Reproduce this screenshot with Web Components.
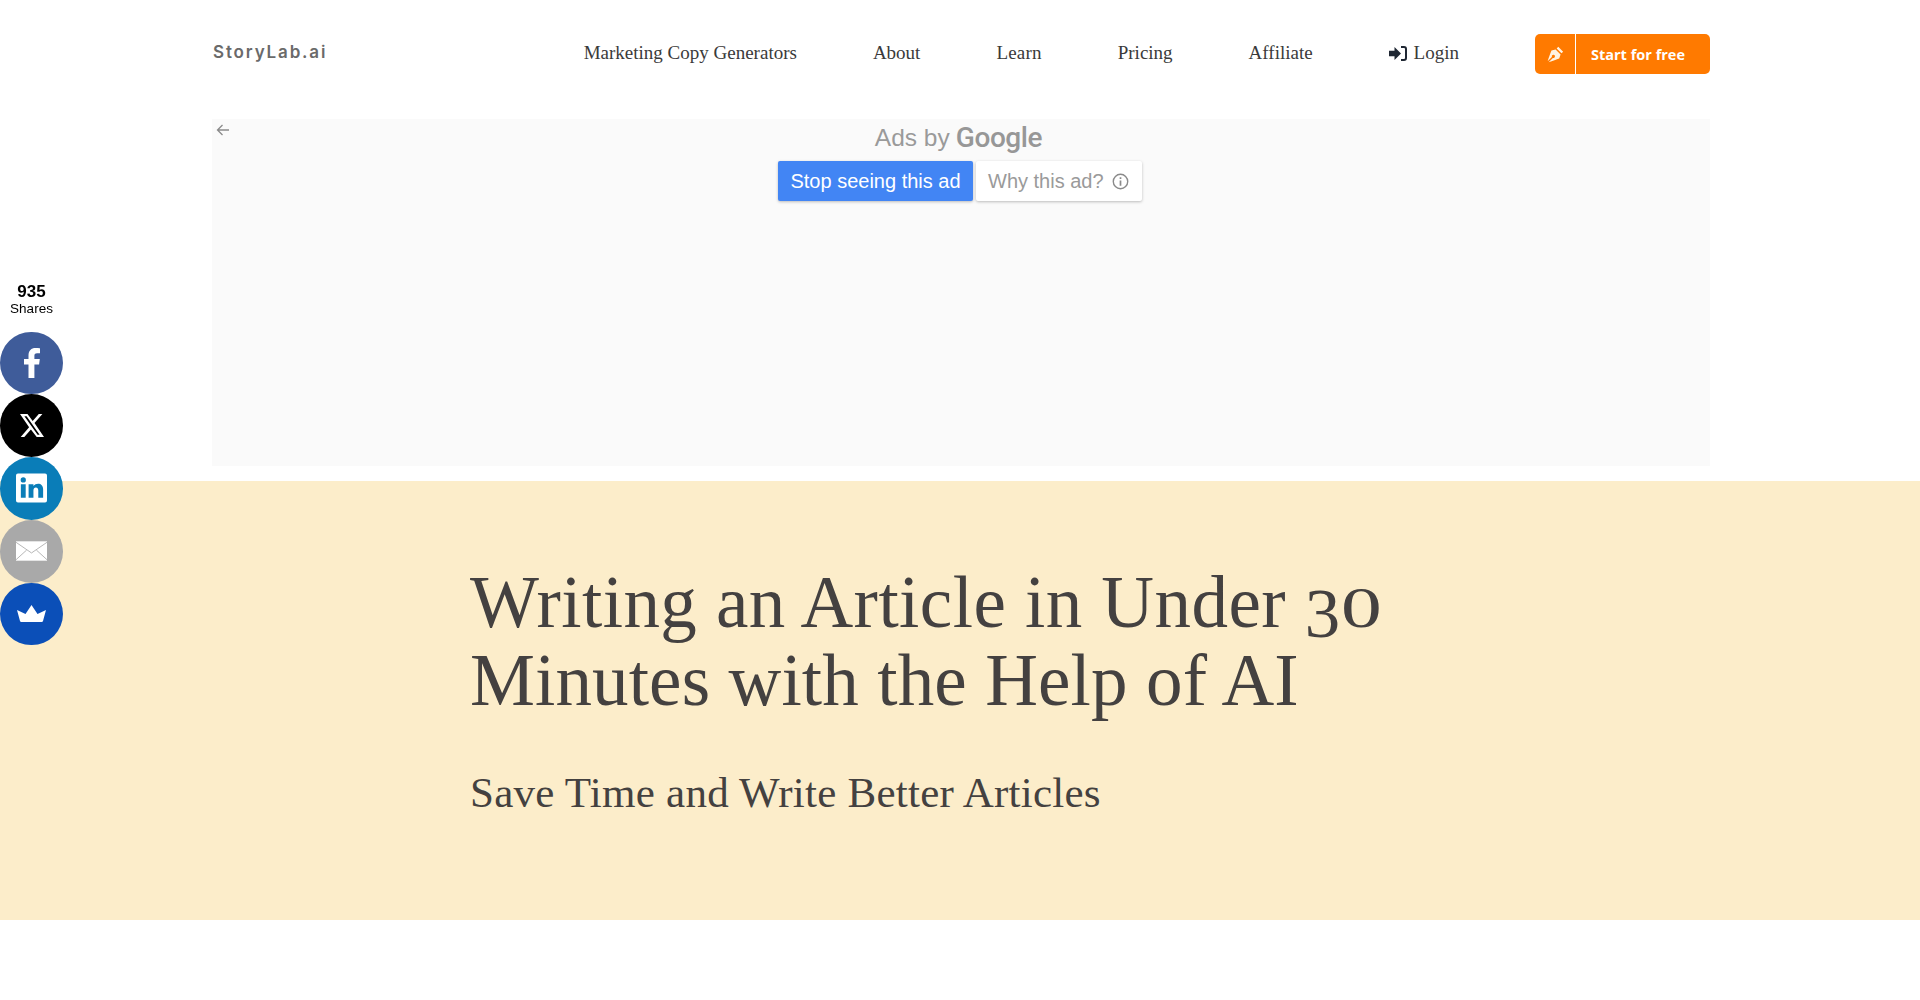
<!DOCTYPE html>
<html lang="en">
<head>
<meta charset="utf-8">
<title>Writing an Article in Under 30 Minutes with the Help of AI</title>
<style>
  html, body { margin: 0; padding: 0; background: #fff; }
  body { font-family: "Liberation Serif", serif; height: 1000px; overflow: hidden; }
  /* Georgia's figures are old style: the 3 drops below the baseline, the 0 is a wide x-height round */
  .fig { line-height: 0; letter-spacing: 0; }
  .fig.three { font-size: .97em; position: relative; top: .14em; }
  .fig.zero { display: inline-block; font-size: .77em; margin-left: 1px; transform: scaleX(1.45); transform-origin: left center; }
  .line2 { letter-spacing: .13px; }
</style>
</head>
<body>
<site-header></site-header>
<ad-slot></ad-slot>
<article-hero>
  <span slot="title">Writing an Article in Under <span class="fig three">3</span><span class="fig zero">0</span> <span class="line2">Minutes with the Help of AI</span></span>
  <span slot="subtitle">Save Time and Write Better Articles</span>
</article-hero>
<share-bar count="935"></share-bar>

<script>
class SiteHeader extends HTMLElement {
  constructor() {
    super();
    this.attachShadow({ mode: "open" });
  }
  connectedCallback() {
    this.shadowRoot.innerHTML = `
      <style>
        :host { display: block; height: 119px; }
        .bar { width: 1498px; margin: 0 0 0 212px; height: 108px; display: flex; align-items: center; padding-left: 1px; box-sizing: border-box; }
        .logo { font: 600 17px "Inter", sans-serif; letter-spacing: 1.85px; color: #6a6a6a; margin-top: -5px; }
        nav { margin-left: auto; display: flex; align-items: center; gap: 76px; font: 19px "Liberation Serif", serif; color: #3a3a3a; }
        nav > span:not(.btn) { position: relative; top: -1px; }
        .learn { letter-spacing: .2px; }
        .login { display: flex; align-items: center; gap: 7px; }
        .login svg { width: 18px; height: 15px; }
        .btn { display: flex; align-items: stretch; width: 175px; height: 40px; border-radius: 5px; overflow: hidden; background: #ff7a00; color: #fff; font: 700 14.500px "Open Sans", sans-serif; }
        .btn .ico { width: 40px; display: flex; align-items: center; justify-content: center; border-right: 1px solid #fff; }
        .btn .ico svg { width: 17px; height: 17px; }
        .btn .lab { flex: 1; display: flex; align-items: center; padding-left: 15px; }
      </style>
      <div class="bar">
        <div class="logo">StoryLab.ai</div>
        <nav>
          <span>Marketing Copy Generators</span>
          <span>About</span>
          <span class="learn">Learn</span>
          <span>Pricing</span>
          <span>Affiliate</span>
          <span class="login">
            <svg viewBox="0 0 18 15"><path fill="#1f2733" d="M0 4.800h5.500V1l6.500 6.500L5.500 14v-3.800H0z"/><path fill="none" stroke="#1f2733" stroke-width="2" d="M12 1h3a2 2 0 0 1 2 2v9a2 2 0 0 1-2 2h-3"/></svg>
            Login
          </span>
          <span class="btn">
            <span class="ico"><svg viewBox="0 0 16 16"><path fill="#fff3e2" d="M10.600 .8l4.600 4.600-1.600 1.500-4.500-4.500zM8.100 3.200l4.700 4.700-1.300 3.800c-2.700 1-5.800 2.100-10 3.500l4-4a1.500 1.500 0 1 0-.9-.9l-4 4c1.400-4.200 2.500-7.300 3.600-10z"/></svg></span>
            <span class="lab">Start for free</span>
          </span>
        </nav>
      </div>`;
  }
}
customElements.define("site-header", SiteHeader);

class AdSlot extends HTMLElement {
  constructor() {
    super();
    this.attachShadow({ mode: "open" });
  }
  connectedCallback() {
    this.shadowRoot.innerHTML = `
      <style>
        :host { display: block; width: 1498px; height: 347px; margin: 0 0 0 212px; background: #fafafa; position: relative; font-family: "Liberation Sans", sans-serif; }
        .back { position: absolute; left: 3px; top: 3px; width: 16px; height: 16px; }
        .inner { display: flex; flex-direction: column; align-items: center; }
        .by { height: 37px; margin-bottom: 5px; display: flex; align-items: center; gap: 6px; font-size: 24.500px; color: #9a9a9a; margin-left: -5px; }
        .g { font: 500 28px "Roboto", sans-serif; color: #979797; letter-spacing: -.4px; }
        .row { display: flex; gap: 3px; margin-left: -2px; }
        .stop, .why { height: 40px; display: flex; align-items: center; font-size: 20px; border-radius: 2px; box-shadow: 0 1px 3px rgba(0,0,0,.25); box-sizing: border-box; }
        .stop { width: 195px; justify-content: center; background: #4285f4; color: #fff; }
        .why { width: 166px; padding-left: 12px; gap: 8px; background: #fff; color: #9a9a9a; }
        .why svg { width: 17px; height: 17px; }
      </style>
      <svg class="back" viewBox="0 0 16 16"><path fill="none" stroke="#8a8a8a" stroke-width="1.300" d="M14 8H2.500M7.500 3L2.500 8l5 5"/></svg>
      <div class="inner">
        <div class="by"><span>Ads by</span><span class="g">Google</span></div>
        <div class="row">
          <div class="stop">Stop seeing this ad</div>
          <div class="why">Why this ad?
            <svg viewBox="0 0 16 16"><circle cx="8" cy="8" r="6.800" fill="none" stroke="#8a8a8a" stroke-width="1.300"/><path fill="#8a8a8a" d="M7.200 7h1.600v5H7.200zM7.200 4h1.600v1.600H7.200z"/></svg>
          </div>
        </div>
      </div>`;
  }
}
customElements.define("ad-slot", AdSlot);

class ArticleHero extends HTMLElement {
  constructor() {
    super();
    this.attachShadow({ mode: "open" });
  }
  connectedCallback() {
    this.shadowRoot.innerHTML = `
      <style>
        :host { display: block; margin-top: 15px; height: 439px; background: #fcedca; color: #444140; font-family: "Liberation Serif", serif; box-sizing: border-box; padding: 83px 0 0 470px; }
        h1 { margin: 0; width: 950px; font-weight: 400; font-size: 73px; line-height: 78px; letter-spacing: .45px; }
        h2 { margin: 48px 0 0; font-weight: 400; font-size: 43px; line-height: 50px; letter-spacing: .25px; }
      </style>
      <h1><slot name="title"></slot></h1>
      <h2><slot name="subtitle"></slot></h2>`;
  }
}
customElements.define("article-hero", ArticleHero);

class ShareBar extends HTMLElement {
  constructor() {
    super();
    this.attachShadow({ mode: "open" });
  }
  connectedCallback() {
    const count = this.getAttribute("count") || "0";
    this.shadowRoot.innerHTML = `
      <style>
        :host { display: flex; flex-direction: column; position: fixed; left: 0; top: 282px; width: 63px; font-family: "Liberation Sans", sans-serif; color: #000; }
        .count { text-align: center; height: 49.500px; line-height: 1; }
        .count b { display: block; font-size: 17px; line-height: 19px; }
        .count span { display: block; font-size: 13.500px; line-height: 15px; }
        .c { width: 63px; height: 62.750px; border-radius: 50%; display: flex; align-items: center; justify-content: center; }
        .c svg { display: block; }
      </style>
      <div class="count"><b>${count}</b><span>Shares</span></div>
      <div class="c" style="background:#3f5c9a"><svg width="16" height="30" viewBox="0 0 16 30"><path fill="#fff" d="M4.500 30V16.500H0v-5.500h4.500V7.500C4.500 2.500 7.300 0 11.500 0c1.900 0 3.500.1 4.500.3v4.900h-2.900c-2.200 0-2.700 1-2.700 2.600V11h5.400l-.7 5.500h-4.700V30z"/></svg></div>
      <div class="c" style="background:#000"><svg width="24" height="23" viewBox="0 0 24 23"><path fill="#fff" d="M18.800 0h3.600l-7.900 9.100L24 23h-7.300l-5.800-7.600L4.300 23H.7l8.400-9.700L0 0h7.500l5.200 6.900zm-1.200 20.700h2L6.600 2.200H4.400z"/></svg></div>
      <div class="c" style="background:#0a7db8"><svg width="31" height="30" viewBox="0 0 32 30"><path fill="#fff" fill-rule="evenodd" d="M2 0h28a2 2 0 0 1 2 2v26a2 2 0 0 1-2 2H2a2 2 0 0 1-2-2V2a2 2 0 0 1 2-2zm3 11v14h5V11zm2.500-7a2.700 2.700 0 1 0 0 5.400 2.700 2.700 0 0 0 0-5.400zM13 11v14h5v-7.500c0-2 1-3 2.500-3s2.500 1 2.500 3V25h5v-8.500c0-4-2.200-5.900-5.200-5.900-2 0-3.400.9-4.800 2.400V11z"/></svg></div>
      <div class="c" style="background:#a9a9a9"><svg width="31" height="20" viewBox="0 0 32 20"><rect width="32" height="20" fill="#fff"/><path fill="none" stroke="#b5b5b5" d="M0 1l16 11L32 1M0 19l11-10M32 19L21 9"/></svg></div>
      <div class="c" style="background:#0b4fb8"><svg width="29" height="17" viewBox="0 0 29 17"><path fill="#fff" d="M0 5l8.500 4L14.500 0l6 9L29 5l-3 11a1.500 1.500 0 0 1-1.500 1h-20A1.500 1.500 0 0 1 3 16z"/></svg></div>`;
  }
}
customElements.define("share-bar", ShareBar);
</script>
</body>
</html>
